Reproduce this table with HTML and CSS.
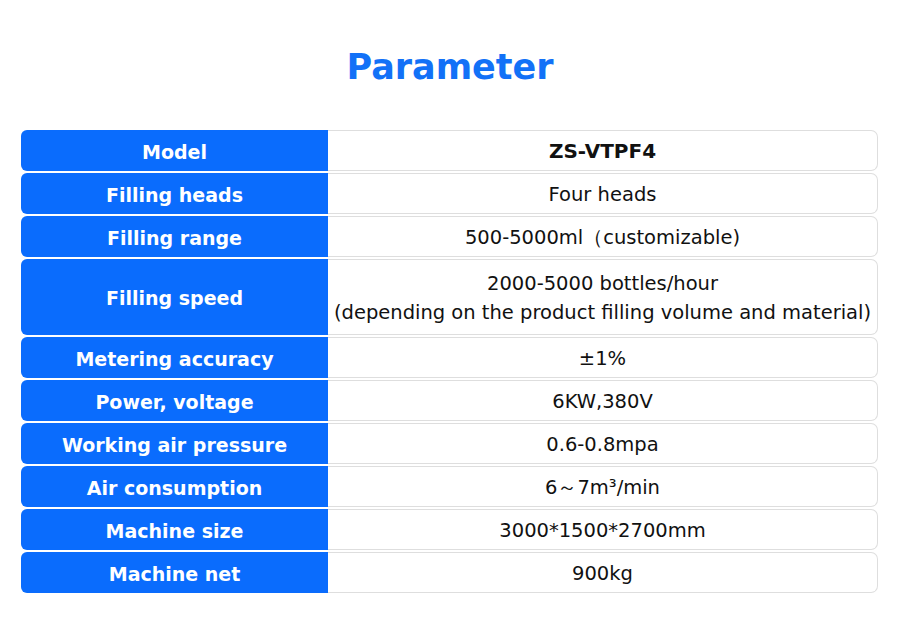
FILE: index.html
```html
<!DOCTYPE html>
<html lang="en">
  <head>
    <meta charset="UTF-8" />
    <meta name="viewport" content="width=device-width, initial-scale=1.0" />
    <title>Parameter</title>
    <link rel="stylesheet" href="styles.css">
  </head>
  <body>
    <h1 class="title">Parameter</h1>

    <div class="params">
      <div class="row">
        <div class="label">Model</div>
        <div class="value bold">ZS-VTPF4</div>
      </div>
      <div class="row">
        <div class="label">Filling heads</div>
        <div class="value">Four heads</div>
      </div>
      <div class="row">
        <div class="label">Filling range</div>
        <div class="value">500-5000ml（customizable)</div>
      </div>
      <div class="row tall">
        <div class="label">Filling speed</div>
        <div class="value">
          <span>2000-5000 bottles/hour</span>
          <span>(depending on the product filling volume and material)</span>
        </div>
      </div>
      <div class="row">
        <div class="label">Metering accuracy</div>
        <div class="value">±1%</div>
      </div>
      <div class="row">
        <div class="label">Power, voltage</div>
        <div class="value">6KW,380V</div>
      </div>
      <div class="row">
        <div class="label">Working air pressure</div>
        <div class="value">0.6-0.8mpa</div>
      </div>
      <div class="row">
        <div class="label">Air consumption</div>
        <div class="value">6～7m³/min</div>
      </div>
      <div class="row">
        <div class="label">Machine size</div>
        <div class="value">3000*1500*2700mm</div>
      </div>
      <div class="row">
        <div class="label">Machine net</div>
        <div class="value">900kg</div>
      </div>
    </div>
  </body>
</html>
```

FILE: styles.css
```css
:root {
  --blue: #0a6cfd;
  --title-blue: #1271f7;
  --line: #dedede;
}

* {
  box-sizing: border-box;
}

body {
  margin: 0;
  background: #fff;
  font-family: "DejaVu Sans", sans-serif;
}

.title {
  margin: 47px 0 0;
  text-align: center;
  color: var(--title-blue);
  font-size: 35px;
  line-height: 40px;
  font-weight: bold;
}

.params {
  margin: 43px 22px 0 21px;
  display: flex;
  flex-direction: column;
  gap: 2px;
}

.row {
  display: flex;
  height: 41px;
}

.row.tall {
  height: 76px;
}

.label {
  width: 307px;
  flex-shrink: 0;
  display: flex;
  align-items: center;
  justify-content: center;
  padding-top: 2px;
  background: var(--blue);
  color: #fff;
  font-weight: bold;
  font-size: 19px;
  border-radius: 6px 0 0 6px;
}

.value {
  flex: 1;
  display: flex;
  flex-direction: column;
  align-items: center;
  justify-content: center;
  padding-top: 2px;
  border: 1px solid var(--line);
  border-left: none;
  border-radius: 0 7px 7px 0;
  color: #111;
  font-size: 19.5px;
  line-height: 29px;
}

.value.bold {
  font-weight: bold;
  font-size: 20px;
}
```
